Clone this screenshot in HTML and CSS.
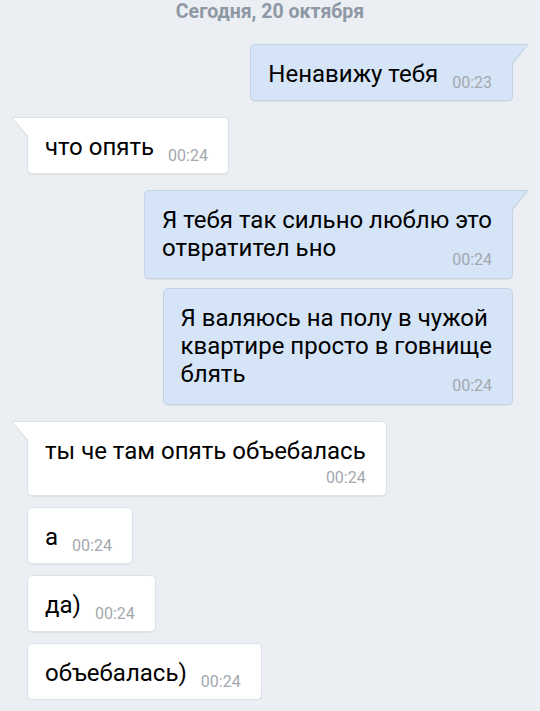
FILE: index.html
```html
<!DOCTYPE html>
<html lang="ru">
<head>
  <meta charset="UTF-8">
  <meta name="viewport" content="width=device-width, initial-scale=1.0">
  <title>Сообщения</title>
  <link rel="stylesheet" href="styles.css">
</head>
<body>
  <main class="chat">
    <div class="date">Сегодня, 20 октября</div>

    <div class="group out">
      <div class="bubble tail">
        <span class="text">Ненавижу тебя</span>
        <span class="time">00:23</span>
      </div>
    </div>

    <div class="group in">
      <div class="bubble tail">
        <span class="text">что опять</span>
        <span class="time">00:24</span>
      </div>
    </div>

    <div class="group out">
      <div class="bubble tail stacked">
        <span class="text">Я тебя так сильно люблю это<br>отвратител ьно</span>
        <span class="time">00:24</span>
      </div>
      <div class="bubble stacked">
        <span class="text">Я валяюсь на полу в чужой<br>квартире просто в говнище<br>блять</span>
        <span class="time">00:24</span>
      </div>
    </div>

    <div class="group in">
      <div class="bubble tail stacked below">
        <span class="text">ты че там опять объебалась</span>
        <span class="time">00:24</span>
      </div>
      <div class="bubble">
        <span class="text">а</span>
        <span class="time">00:24</span>
      </div>
      <div class="bubble">
        <span class="text">да)</span>
        <span class="time">00:24</span>
      </div>
      <div class="bubble">
        <span class="text">объебалась)</span>
        <span class="time">00:24</span>
      </div>
    </div>
  </main>
</body>
</html>
```

FILE: styles.css
```css
html,
body {
  margin: 0;
  background-color: #ebeef2;
}

body {
  font-family: Roboto, "Noto Sans", sans-serif;
  color: #000;
}

.chat {
  display: flex;
  flex-direction: column;
  gap: 16px;
  padding: 0 27px;
}

.date {
  text-align: center;
  font-size: 19.5px;
  font-weight: 700;
  line-height: 24px;
  color: #8d98a4;
  margin-bottom: 4px;
}

.group {
  display: flex;
  flex-direction: column;
}

.group.out {
  align-items: flex-end;
  gap: 9px;
}

.group.in {
  align-items: flex-start;
  gap: 11px;
}

.bubble {
  position: relative;
  display: flex;
  align-items: flex-start;
  padding: 15px 20px 7px 17px;
  border: 1px solid #dde2e7;
  border-radius: 5px;
  background-color: #fff;
  box-shadow: 0 1px 0 rgba(0, 0, 0, 0.05);
}

.out .bubble {
  background-color: #d5e4f6;
  border-color: #c4d3e3;
}

.text {
  font-size: 24px;
  line-height: 28px;
  white-space: nowrap;
}

.time {
  font-size: 16px;
  line-height: 20px;
  color: #a3a8ae;
  margin: 13px 0 0 14px;
}

/* multi-line: time sits at the right of the last line */
.bubble.stacked {
  flex-direction: column;
  align-items: flex-end;
  padding-bottom: 8px;
}

.stacked .text {
  align-self: stretch;
}

.stacked .time {
  margin: -12px 0 0;
}

.stacked.below {
  padding-bottom: 7px;
}

.stacked.below .time {
  margin-top: 3px;
}

/* tails */
.bubble.tail::before,
.bubble.tail::after {
  content: "";
  position: absolute;
}

.out .bubble.tail {
  border-top-right-radius: 0;
}

.out .bubble.tail::before {
  top: -1px;
  right: -17px;
  width: 17px;
  height: 21px;
  background-color: #c4d3e3;
  clip-path: polygon(0 0, 100% 0, 0 100%);
}

.out .bubble.tail::after {
  top: 0;
  right: -15px;
  width: 16px;
  height: 19px;
  background-color: #d5e4f6;
  clip-path: polygon(0 0, 100% 0, 0 100%);
}

.in .bubble.tail {
  border-top-left-radius: 0;
}

.in .bubble.tail::before {
  top: -1px;
  left: -17px;
  width: 17px;
  height: 21px;
  background-color: #dde2e7;
  clip-path: polygon(0 0, 100% 0, 100% 100%);
}

.in .bubble.tail::after {
  top: 0;
  left: -15px;
  width: 16px;
  height: 19px;
  background-color: #fff;
  clip-path: polygon(0 0, 100% 0, 100% 100%);
}
```
